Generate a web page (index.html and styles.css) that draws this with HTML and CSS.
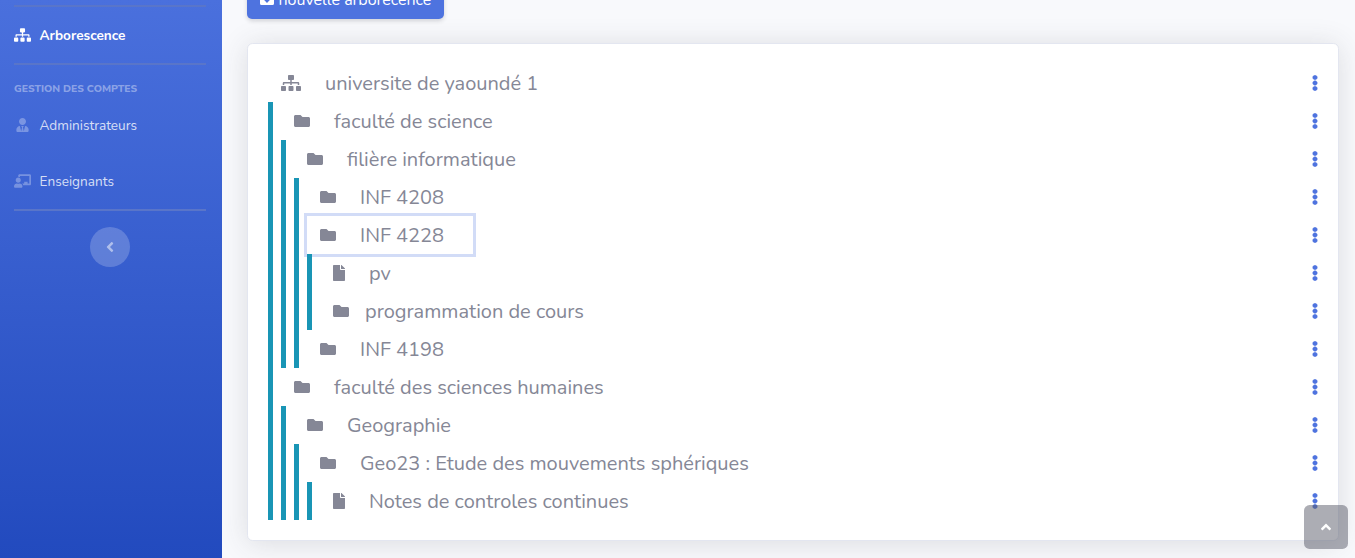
FILE: index.html
```html
<!DOCTYPE html>
<html lang="fr">
<head>
<meta charset="utf-8">
<title>Arborescence</title>
<link rel="stylesheet" href="styles.css">
</head>
<body>
<svg class="sprite" aria-hidden="true">
  <symbol id="sitemap" viewBox="0 0 640 512"><path d="M128 352H32c-17.67 0-32 14.33-32 32v96c0 17.67 14.33 32 32 32h96c17.67 0 32-14.33 32-32v-96c0-17.67-14.33-32-32-32zm-24-80h192v48h48v-48h192v48h48v-57.59c0-21.17-17.23-38.41-38.41-38.41H344v-64h40c17.67 0 32-14.33 32-32V32c0-17.67-14.33-32-32-32H256c-17.67 0-32 14.33-32 32v96c0 17.67 14.33 32 32 32h40v64H94.41C73.23 224 56 241.23 56 262.41V320h48v-48zm264 80h-96c-17.67 0-32 14.33-32 32v96c0 17.67 14.33 32 32 32h96c17.67 0 32-14.33 32-32v-96c0-17.67-14.33-32-32-32zm240 0h-96c-17.67 0-32 14.33-32 32v96c0 17.67 14.33 32 32 32h96c17.67 0 32-14.33 32-32v-96c0-17.67-14.33-32-32-32z"/></symbol>
  <symbol id="folder" viewBox="0 0 512 512"><path d="M464 128H272l-64-64H48C21.49 64 0 85.49 0 112v288c0 26.51 21.49 48 48 48h416c26.51 0 48-21.49 48-48V176c0-26.51-21.49-48-48-48z"/></symbol>
  <symbol id="file" viewBox="0 0 384 512"><path d="M224 136V0H24C10.7 0 0 10.7 0 24v464c0 13.3 10.7 24 24 24h336c13.3 0 24-10.7 24-24V160H248c-13.2 0-24-10.8-24-24zm160-14.1v6.1H256V0h6.1c6.4 0 12.5 2.5 17 7l97.9 98c4.5 4.5 7 10.6 7 16.9z"/></symbol>
  <symbol id="dots" viewBox="0 0 192 512"><path d="M96 184c39.8 0 72 32.2 72 72s-32.2 72-72 72-72-32.2-72-72 32.2-72 72-72zM24 80c0 39.8 32.2 72 72 72s72-32.2 72-72S135.8 8 96 8 24 40.2 24 80zm0 352c0 39.8 32.2 72 72 72s72-32.2 72-72-32.2-72-72-72-72 32.2-72 72z"/></symbol>
  <symbol id="user" viewBox="0 0 448 512"><path d="M224 256c70.7 0 128-57.3 128-128S294.7 0 224 0 96 57.3 96 128s57.3 128 128 128zm95.8 32.6L272 480l-32-136 32-56h-96l32 56-32 136-47.8-191.4C56.9 292 0 350.3 0 422.4V464c0 26.5 21.5 48 48 48h352c26.5 0 48-21.5 48-48v-41.6c0-72.1-56.9-130.4-128.2-133.8z"/></symbol>
  <symbol id="teacher" viewBox="0 0 640 512"><path d="M208 352c-2.39 0-4.78.35-7.06 1.09C187.98 357.3 174.35 360 160 360c-14.35 0-27.98-2.7-40.95-6.91-2.28-.74-4.66-1.09-7.05-1.09C49.94 352-.33 402.48 0 464.62.14 490.88 21.73 512 48 512h224c26.27 0 47.86-21.12 48-47.38.33-62.14-49.94-112.62-112-112.62zm-48-32c53.02 0 96-42.98 96-96s-42.98-96-96-96-96 42.98-96 96 42.98 96 96 96zM592 0H208c-26.47 0-48 22.25-48 49.59V96c23.42 0 45.1 6.78 64 17.8V64h352v288h-64v-64H384v64h-76.24c19.1 16.69 33.12 38.73 39.69 64H592c26.47 0 48-22.25 48-49.59V49.59C640 22.25 618.47 0 592 0z"/></symbol>
  <symbol id="download" viewBox="0 0 14 16"><path fill-rule="evenodd" d="M1.500 2h11a1.500 1.500 0 0 1 1.500 1.500v11a1.500 1.500 0 0 1-1.500 1.500h-11a1.500 1.500 0 0 1-1.500-1.500v-11a1.500 1.500 0 0 1 1.500-1.500zM5.800 5v5H3.200L7 14l3.800-4H8.200V5z"/></symbol>
  <symbol id="left" viewBox="0 0 256 512"><path d="M31.700 239l136-136c9.400-9.400 24.600-9.400 33.900 0l22.600 22.600c9.400 9.400 9.400 24.600 0 33.900L127.900 256l96.400 96.400c9.400 9.400 9.400 24.600 0 33.900L201.700 409c-9.400 9.400-24.600 9.400-33.900 0l-136-136c-9.500-9.400-9.500-24.600-.1-34z"/></symbol>
  <symbol id="up" viewBox="0 0 320 512"><path d="M177 159.700l136 136c9.400 9.400 9.400 24.600 0 33.900l-22.600 22.600c-9.400 9.400-24.600 9.400-33.900 0L160 255.900l-96.400 96.400c-9.400 9.400-24.600 9.400-33.900 0L7 329.700c-9.400-9.400-9.400-24.600 0-33.900l136-136c9.400-9.500 24.600-9.500 34-.1z"/></symbol>
</svg>
<div class="page">
  <nav class="sidebar">
    <hr class="rule">
    <a class="nav-item active"><svg class="nav-icon"><use href="#sitemap"/></svg><span>Arborescence</span></a>
    <hr class="rule">
    <div class="heading">Gestion des comptes</div>
    <a class="nav-item"><svg class="nav-icon"><use href="#user"/></svg><span>Administrateurs</span></a>
    <a class="nav-item"><svg class="nav-icon"><use href="#teacher"/></svg><span>Enseignants</span></a>
    <hr class="rule">
    <button class="toggle"><svg class="toggle-icon"><use href="#left"/></svg></button>
  </nav>
  <main class="content">
    <button class="new"><svg class="new-icon"><use href="#download"/></svg><span>nouvelle arborecence</span></button>
    <section class="card">
      <div class="tree">
        <div class="row"><button class="node"><svg class="wide"><use href="#sitemap"/></svg><span>universite de yaoundé 1</span></button><svg class="dots"><use href="#dots"/></svg></div>
        <div class="branch">
          <div class="row"><button class="node"><svg class="folder"><use href="#folder"/></svg><span>faculté de science</span></button><svg class="dots"><use href="#dots"/></svg></div>
          <div class="branch">
            <div class="row"><button class="node"><svg class="folder"><use href="#folder"/></svg><span>filière informatique</span></button><svg class="dots"><use href="#dots"/></svg></div>
            <div class="branch">
              <div class="row"><button class="node"><svg class="folder"><use href="#folder"/></svg><span>INF 4208</span></button><svg class="dots"><use href="#dots"/></svg></div>
              <div class="row"><button class="node focused"><svg class="folder"><use href="#folder"/></svg><span>INF 4228</span></button><svg class="dots"><use href="#dots"/></svg></div>
              <div class="branch">
                <div class="row"><button class="node"><svg class="file"><use href="#file"/></svg><span>pv</span></button><svg class="dots"><use href="#dots"/></svg></div>
                <div class="row"><button class="node tight"><svg class="folder"><use href="#folder"/></svg><span>programmation de cours</span></button><svg class="dots"><use href="#dots"/></svg></div>
              </div>
              <div class="row"><button class="node"><svg class="folder"><use href="#folder"/></svg><span>INF 4198</span></button><svg class="dots"><use href="#dots"/></svg></div>
            </div>
          </div>
          <div class="row"><button class="node"><svg class="folder"><use href="#folder"/></svg><span>faculté des sciences humaines</span></button><svg class="dots"><use href="#dots"/></svg></div>
          <div class="branch">
            <div class="row"><button class="node"><svg class="folder"><use href="#folder"/></svg><span>Geographie</span></button><svg class="dots"><use href="#dots"/></svg></div>
            <div class="branch">
              <div class="row"><button class="node"><svg class="folder"><use href="#folder"/></svg><span>Geo23 : Etude des mouvements sphériques</span></button><svg class="dots"><use href="#dots"/></svg></div>
              <div class="branch">
                <div class="row"><button class="node"><svg class="file"><use href="#file"/></svg><span>Notes de controles continues</span></button><svg class="dots"><use href="#dots"/></svg></div>
              </div>
            </div>
          </div>
        </div>
      </div>
    </section>
  </main>
</div>
<a class="scroll-top"><svg class="up-icon"><use href="#up"/></svg></a>
</body>
</html>
```
FILE: styles.css
```css
* { box-sizing: border-box; }
body {
  margin: 0;
  height: 558px;
  overflow: hidden;
  background: #f8f9fc;
  font-family: Nunito, Lato, sans-serif;
  color: #858796;
}
svg { fill: currentColor; flex: none; }
span { white-space: nowrap; }
button { font: inherit; border: 0; background: none; padding: 0; }
.sprite { display: none; }
.page { display: flex; height: 558px; }

.sidebar {
  width: 222px;
  flex: none;
  padding: 5px 16px 0 14px;
  display: flex;
  flex-direction: column;
  background: linear-gradient(180deg, #4a70dd 0%, #224abe 100%);
}
.rule { width: 192px; height: 2px; margin: 0; border: 0; background: #5975c9; }
.nav-item {
  display: flex;
  align-items: center;
  gap: 8.5px;
  height: 56px;
  font-size: 13.6px;
  color: rgba(255, 255, 255, .8);
}
.nav-icon { width: 17px; height: 14px; color: rgba(255, 255, 255, .3); }
.active { color: #fff; font-weight: 700; }
.active .nav-icon { color: #fff; }
.heading {
  height: 32px;
  padding-top: 17px;
  font-size: 10.4px;
  line-height: 14px;
  font-weight: 800;
  text-transform: uppercase;
  color: rgba(255, 255, 255, .4);
}
.toggle {
  display: flex;
  align-items: center;
  justify-content: center;
  width: 40px;
  height: 40px;
  margin: 16px 0 0 76px;
  padding: 0 1px 1px 0;
  border-radius: 50%;
  background: rgba(255, 255, 255, .2);
  color: rgba(255, 255, 255, .5);
}
.toggle-icon { width: 8px; height: 16px; }

.content { flex: 1; padding: 0 16px 0 25px; }
.new {
  display: flex;
  align-items: center;
  gap: 4.5px;
  width: 197px;
  height: 38px;
  margin-top: -19px;
  padding: 0 13px;
  border-radius: 5px;
  background: #4e73df;
  color: #fff;
  font-size: 16px;
  box-shadow: 0 2px 4px rgba(58, 59, 69, .2);
}
.new-icon { width: 14px; height: 16px; margin-bottom: 6px; }
.card {
  height: 498px;
  margin-top: 24px;
  padding: 20px;
  border: 1px solid #e3e6f0;
  border-radius: 5.6px;
  background: #fff;
  box-shadow: 0 2.4px 28px rgba(58, 59, 69, .15);
}
.row { display: flex; align-items: center; justify-content: space-between; height: 38px; }
.node {
  display: flex;
  align-items: center;
  gap: 24px;
  height: 38px;
  padding: 0 12px 0 13px;
  font-size: 20px;
  color: #858796;
}
.tight { gap: 16px; }
.focused { width: 166px; box-shadow: 0 0 0 3px #d2dcf7; }
.branch { position: relative; border-left: 5px solid #1995b5; padding-left: 8px; }
.wide { width: 20px; height: 16px; }
.folder { width: 16px; height: 16px; }
.file { width: 12px; height: 16px; }
.dots { width: 6px; height: 16px; color: #4e73df; stroke: currentColor; stroke-width: 14px; }

.scroll-top {
  position: fixed;
  right: 7px;
  bottom: 9px;
  width: 44px;
  height: 44px;
  display: flex;
  align-items: center;
  justify-content: center;
  border-radius: 5.6px;
  background: rgba(90, 92, 105, .5);
  color: #fff;
}
.up-icon { width: 10px; height: 16px; }
```
